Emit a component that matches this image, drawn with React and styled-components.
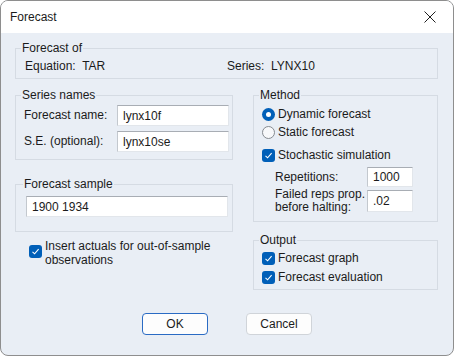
import React from 'react';
import styled, { createGlobalStyle } from 'styled-components';

const GlobalStyle = createGlobalStyle`
  html, body {
    margin: 0;
    padding: 0;
    background: #ffffff;
  }
  body {
    font-family: "Liberation Sans", Arial, sans-serif;
    font-size: 12px;
    color: #1b1b1b;
  }
`;

const Window = styled.div`
  width: 454px;
  height: 356px;
  box-sizing: border-box;
  border: 1px solid #8e8e8e;
  border-radius: 8px;
  overflow: hidden;
  display: flex;
  flex-direction: column;
  background: #e9eef5;
`;

const TitleBar = styled.div`
  height: 32px;
  flex: none;
  background: #ffffff;
  display: flex;
  align-items: center;
  justify-content: space-between;
  padding: 0 9px 0 9px;
  font-size: 12px;
`;

const Close = styled.svg`
  width: 12px;
  height: 12px;
  margin-right: 8px;
`;

const Body = styled.div`
  padding: 8px 15px 0 14px;
  display: flex;
  flex-direction: column;
`;

const Group = styled.fieldset`
  margin: 0;
  margin-top: ${(p) => p.$mt || 0}px;
  min-width: 0;
  border: 1px solid #d5dbe3;
  padding: ${(p) => p.$pad || '0 8px 5px 8px'};
  display: flex;
  flex-direction: column;
`;

const Legend = styled.legend`
  padding: 0 1px;
  margin-left: -3px;
  line-height: 14px;
`;

const InfoRow = styled.div`
  display: flex;
  line-height: 14px;
  padding-top: 4px;
  padding-left: 1px;
`;

const InfoItem = styled.span`
  width: ${(p) => p.$w || 'auto'};
  white-space: pre;
`;

const Columns = styled.div`
  display: grid;
  grid-template-columns: 218px 185px;
  column-gap: 20px;
  margin-top: 9px;
  align-items: start;
`;

const Column = styled.div`
  display: flex;
  flex-direction: column;
`;

const FieldRow = styled.div`
  display: flex;
  align-items: center;
  height: ${(p) => p.$h || 21}px;
  margin-top: ${(p) => p.$mt || 0}px;
`;

const FieldLabel = styled.span`
  width: ${(p) => p.$w}px;
  box-sizing: border-box;
  padding-left: ${(p) => p.$indent || 0}px;
  flex: none;
  line-height: 13px;
`;

const TextBox = styled.div`
  box-sizing: border-box;
  width: ${(p) => p.$w}px;
  height: ${(p) => p.$h || 21}px;
  background: #ffffff;
  border: 1px solid #e2e6eb;
  border-top-color: #a8adb4;
  border-left-color: #c3c8ce;
  padding-left: 5px;
  display: flex;
  align-items: center;
`;

const CheckRow = styled.label`
  display: flex;
  align-items: ${(p) => (p.$top ? 'flex-start' : 'center')};
  gap: 3px;
  height: ${(p) => (p.$top ? 'auto' : '18px')};
  margin-top: ${(p) => p.$mt || 0}px;
  margin-left: ${(p) => p.$ml || 0}px;
  line-height: 14px;
`;

const Box = styled.span`
  width: 13px;
  height: 13px;
  flex: none;
  border-radius: 3px;
  background: #005fb8;
  display: flex;
  align-items: center;
  justify-content: center;
  margin-top: ${(p) => p.$mt || 0}px;
`;

const Radio = styled.span`
  width: 13px;
  height: 13px;
  box-sizing: border-box;
  flex: none;
  border-radius: 50%;
  background: ${(p) => (p.$on ? '#005fb8' : '#f7f8fa')};
  border: ${(p) => (p.$on ? 'none' : '1px solid #858a90')};
  display: flex;
  align-items: center;
  justify-content: center;

  &::after {
    content: '';
    display: ${(p) => (p.$on ? 'block' : 'none')};
    width: 5px;
    height: 5px;
    border-radius: 50%;
    background: #ffffff;
  }
`;

const Buttons = styled.div`
  display: flex;
  justify-content: center;
  gap: 38px;
  margin-top: 23px;
  padding-left: 1px;
`;

const Button = styled.button`
  width: 66px;
  height: 22px;
  box-sizing: border-box;
  font-family: inherit;
  font-size: 12px;
  color: #1b1b1b;
  background: #fdfdfd;
  border: 1px solid ${(p) => (p.$primary ? '#2a6bc4' : '#d0d4d9')};
  border-radius: 4px;
  padding: 0;
`;

const Check = ({ mt }) => (
  <Box $mt={mt}>
    <svg width="9" height="9" viewBox="0 0 9 9">
      <path d="M1.5 4.8 L3.6 6.8 L7.6 2.2" fill="none" stroke="#ffffff" strokeWidth="1.1" />
    </svg>
  </Box>
);

export default function App() {
  return (
    <>
      <GlobalStyle />
      <Window>
        <TitleBar>
          <span>Forecast</span>
          <Close viewBox="0 0 12 12">
            <path d="M0.5 0.5 L11.5 11.5 M11.5 0.5 L0.5 11.5" stroke="#1f1f1f" strokeWidth="1" />
          </Close>
        </TitleBar>
        <Body>
          <Group>
            <Legend>Forecast of</Legend>
            <InfoRow>
              <InfoItem $w="202px">Equation:  TAR</InfoItem>
              <InfoItem>Series:  LYNX10</InfoItem>
            </InfoRow>
          </Group>

          <Columns>
            <Column>
              <Group $pad="3px 2px 7px 8px">
                <Legend>Series names</Legend>
                <FieldRow>
                  <FieldLabel $w={93}>Forecast name:</FieldLabel>
                  <TextBox $w={112}>lynx10f</TextBox>
                </FieldRow>
                <FieldRow $mt={5}>
                  <FieldLabel $w={93}>S.E. (optional):</FieldLabel>
                  <TextBox $w={112}>lynx10se</TextBox>
                </FieldRow>
              </Group>

              <Group $pad="5px 4px 14px 10px" $mt={17}>
                <Legend>Forecast sample</Legend>
                <TextBox $w={202}>1900 1934</TextBox>
              </Group>

              <CheckRow $top $mt={7} $ml={14}>
                <Check mt={6} />
                <span>
                  Insert actuals for out-of-sample
                  <br />
                  observations
                </span>
              </CheckRow>
            </Column>

            <Column>
              <Group $pad="3px 23px 8px 8px">
                <Legend>Method</Legend>
                <CheckRow>
                  <Radio $on />
                  <span>Dynamic forecast</span>
                </CheckRow>
                <CheckRow>
                  <Radio />
                  <span>Static forecast</span>
                </CheckRow>
                <CheckRow $mt={5}>
                  <Check />
                  <span>Stochastic simulation</span>
                </CheckRow>
                <FieldRow $h={20} $mt={3}>
                  <FieldLabel $w={105} $indent={13}>
                    Repetitions:
                  </FieldLabel>
                  <TextBox $w={46} $h={20}>1000</TextBox>
                </FieldRow>
                <FieldRow $h={24} $mt={2}>
                  <FieldLabel $w={105} $indent={13}>
                    Failed reps prop.
                    <br />
                    before halting:
                  </FieldLabel>
                  <TextBox $w={46} $h={22}>.02</TextBox>
                </FieldRow>
              </Group>

              <Group $pad="2px 8px 3px 8px" $mt={11}>
                <Legend>Output</Legend>
                <CheckRow>
                  <Check />
                  <span>Forecast graph</span>
                </CheckRow>
                <CheckRow $mt={1}>
                  <Check />
                  <span>Forecast evaluation</span>
                </CheckRow>
              </Group>
            </Column>
          </Columns>

          <Buttons>
            <Button $primary>OK</Button>
            <Button>Cancel</Button>
          </Buttons>
        </Body>
      </Window>
    </>
  );
}
